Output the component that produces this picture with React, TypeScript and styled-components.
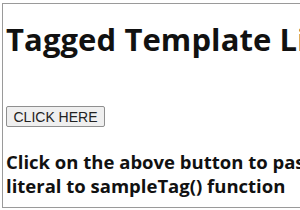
import React from "react";
import styled, { createGlobalStyle } from "styled-components";

const Global = createGlobalStyle`
  html, body { margin: 0; padding: 0; background: #fff; overflow: hidden; }
  body { width: 300px; height: 210px; }
`;

const Frame = styled.div`
  margin: 3px 0 0 2px;
  height: 203px;
  border-top: 1px solid #9a9a9a;
  border-left: 1px solid #9a9a9a;
  border-bottom: 1px solid #9a9a9a;
  padding: 0 0 0 3px;
  overflow: hidden;
  white-space: nowrap;
  font-family: "Open Sans", "Noto Sans", sans-serif;
  color: #111;
`;

const Heading = styled.h1`
  margin: 15px 0 0 0;
  font-size: 31px;
  font-weight: 700;
  line-height: 41px;
  letter-spacing: 0.1px;
`;

const Button = styled.button`
  margin-top: 46px;
  display: block;
  width: 99px;
  height: 21px;
  padding: 0;
  font-family: "Liberation Sans", Arial, sans-serif;
  font-size: 14px;
  color: #222;
  background: #efefef;
  border: 1px solid #8f8f8f;
  border-radius: 2px;
`;

const Para = styled.p`
  margin: 23px 0 0 0;
  font-size: 18.5px;
  font-weight: 700;
  line-height: 24px;
  white-space: nowrap;
`;

export default function App() {
  return (
    <>
      <Global />
      <Frame>
        <Heading>Tagged Template Literals</Heading>
        <Button>CLICK HERE</Button>
        <Para>
          Click on the above button to pass template
          <br />
          literal to sampleTag() function
        </Para>
      </Frame>
    </>
  );
}
